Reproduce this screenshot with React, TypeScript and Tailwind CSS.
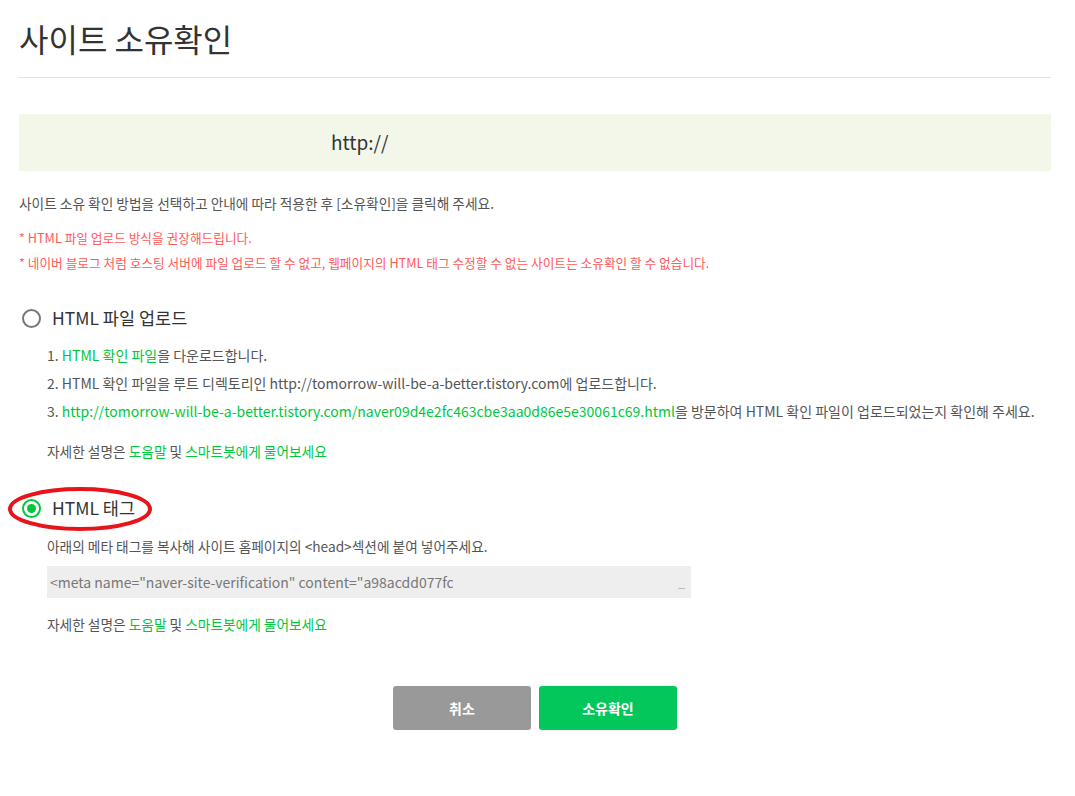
export default function App() {
  const font = { fontFamily: '"Noto Sans CJK KR", "Noto Sans", sans-serif' };
  return (
    <div className="min-h-screen bg-white px-[19px] pr-[24px] text-[#555]" style={font}>
      <h1 className="pt-[14px] pb-[15px] text-[32px] font-normal leading-[48px] text-[#333]">사이트 소유확인</h1>
      <div className="border-t border-[#e2e2e2]" />

      <div className="mt-[36px] flex h-[57px] items-center bg-[#f2f7ea] pl-[312px] text-[19px] text-[#333]">http://</div>

      <p className="mt-[22px] text-[13.7px] leading-[20px] text-[#555]">
        사이트 소유 확인 방법을 선택하고 안내에 따라 적용한 후 [소유확인]을 클릭해 주세요.
      </p>
      <p className="mt-[16px] text-[12.7px] leading-[18px] text-[#ff5a5a]">* HTML 파일 업로드 방식을 권장해드립니다.</p>
      <p className="mt-[7px] text-[12.7px] leading-[18px] text-[#ff5a5a]">
        * 네이버 블로그 처럼 호스팅 서버에 파일 업로드 할 수 없고, 웹페이지의 HTML 태그 수정할 수 없는 사이트는 소유확인 할 수 없습니다.
      </p>

      <div className="mt-[34px] flex items-center gap-[11px] pl-[3px]">
        <span className="h-[19px] w-[19px] rounded-full border-2 border-[#777]" />
        <span className="text-[17.5px] leading-[24px] text-[#333]">HTML 파일 업로드</span>
      </div>
      <div className="mt-[11px] pl-[28px] text-[14px] leading-[28px]">
        <p>
          1. <span className="text-[#00c73c]">HTML 확인 파일</span>을 다운로드합니다.
        </p>
        <p>2. HTML 확인 파일을 루트 디렉토리인 http://tomorrow-will-be-a-better.tistory.com에 업로드합니다.</p>
        <p>
          3. <span className="text-[#00c73c]">http://tomorrow-will-be-a-better.tistory.com/naver09d4e2fc463cbe3aa0d86e5e30061c69.html</span>을 방문하여 HTML 확인 파일이 업로드되었는지 확인해 주세요.
        </p>
        <p className="mt-[12px] text-[13.7px]">
          자세한 설명은 <span className="text-[#00c73c]">도움말</span> 및 <span className="text-[#00c73c]">스마트봇에게 물어보세요</span>
        </p>
      </div>

      <div className="relative mt-[31px] flex items-center gap-[11px] pl-[3px]">
        <span className="flex h-[19px] w-[19px] items-center justify-center rounded-full border-2 border-[#00c73c]">
          <span className="h-[9px] w-[9px] rounded-full bg-[#00c73c]" />
        </span>
        <span className="text-[17.5px] leading-[24px] text-[#333]">HTML 태그</span>
        <svg className="absolute left-[-12px] top-[-10px]" width="146" height="46" viewBox="0 0 146 46">
          <ellipse cx="73" cy="23" rx="70" ry="20" fill="none" stroke="#e8141c" strokeWidth="4" />
        </svg>
      </div>
      <div className="mt-[16px] pl-[28px] text-[13.7px]">
        <p className="leading-[20px]">아래의 메타 태그를 복사해 사이트 홈페이지의 &lt;head&gt;섹션에 붙여 넣어주세요.</p>
        <div className="relative mt-[10px] flex h-[32px] w-[644px] items-center bg-[#eeeeee] pl-[3px]">
          <input
            readOnly
            value={'<meta name="naver-site-verification" content="a98acdd077fc9" />'}
            className="w-[403px] bg-transparent text-[14px] text-[#777] outline-none"
          />
          <span className="absolute right-[6px] top-[22px] h-px w-[7px] bg-[#bbb]" />
        </div>
        <p className="mt-[16px] leading-[20px]">
          자세한 설명은 <span className="text-[#00c73c]">도움말</span> 및 <span className="text-[#00c73c]">스마트봇에게 물어보세요</span>
        </p>
      </div>

      <div className="mt-[52px] flex justify-center gap-[8px]">
        <button className="h-[44px] w-[138px] rounded-[3px] bg-[#999999] text-[14px] font-bold text-white">취소</button>
        <button className="h-[44px] w-[138px] rounded-[3px] bg-[#03c75a] text-[14px] font-bold text-white">소유확인</button>
      </div>
    </div>
  );
}
